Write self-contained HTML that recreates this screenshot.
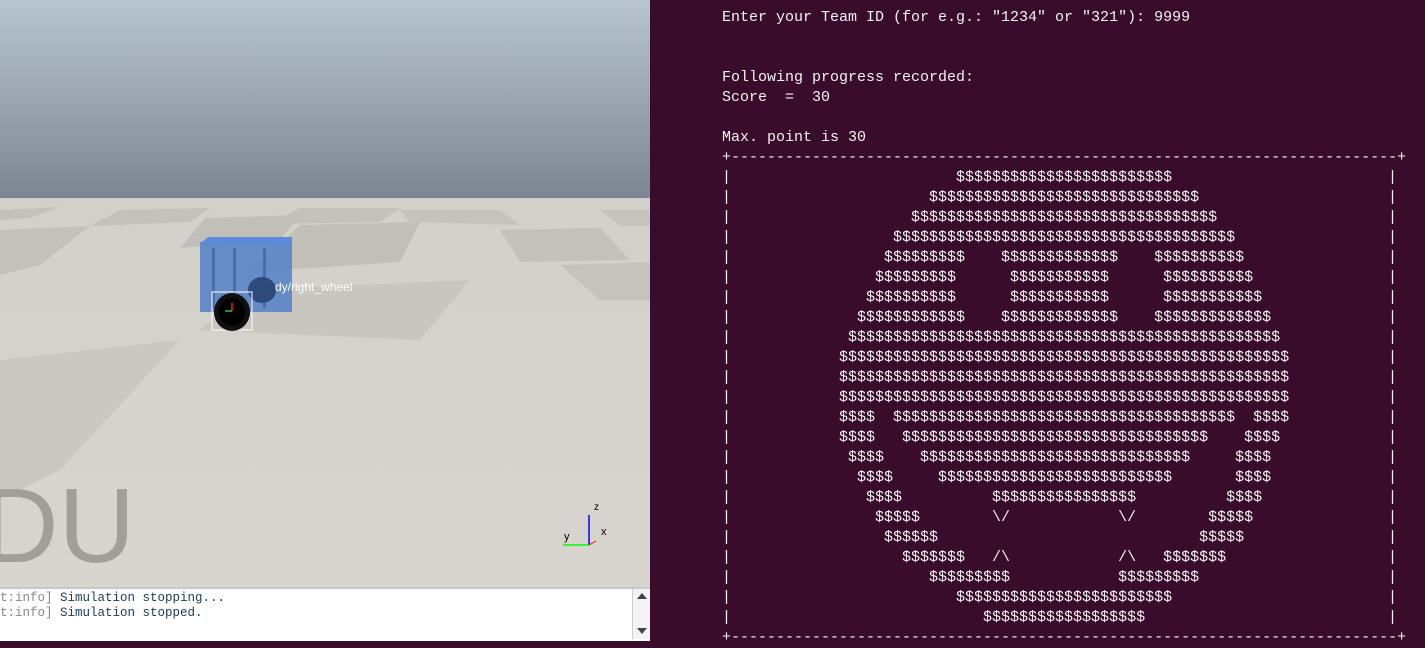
<!DOCTYPE html>
<html><head><meta charset="utf-8"><style>
*{margin:0;padding:0;box-sizing:border-box}
html,body{width:1425px;height:641px;overflow:hidden;background:#380c2a}
#left{position:absolute;left:0;top:0;width:650px;height:641px;background:#d5d2cb;overflow:hidden}
#term{position:absolute;left:650px;top:0;width:775px;height:641px;background:#380c2a}
pre{font-family:"Liberation Mono",monospace;font-size:15px;line-height:20px;color:#f2f2f2;position:absolute;white-space:pre}
#console{position:absolute;left:0;top:587px;width:650px;height:54px;background:#fff;border-top:2px solid #c8c8c8}
#console pre{font-size:12.5px;line-height:15px;left:0;top:2px;color:#1d3b57}
#console .g{color:#888}
#sb{position:absolute;left:632px;top:589px;width:18px;height:50px;background:#f4f4f4;border-left:1px solid #ccc}
</style></head><body>
<div id="left">
<svg width="650" height="641" style="position:absolute;left:0;top:0">
<defs><linearGradient id="sky" x1="0" y1="0" x2="0" y2="1"><stop offset="0" stop-color="#b8c4d0"/><stop offset="1" stop-color="#7b8591"/></linearGradient>
<linearGradient id="gr" x1="0" y1="0" x2="0" y2="1"><stop offset="0" stop-color="#d3d0c9"/><stop offset="1" stop-color="#d8d5ce"/></linearGradient></defs>
<rect x="0" y="0" width="650" height="202" fill="url(#sky)"/>
<rect x="0" y="198" width="650" height="400" fill="url(#gr)"/>
<polygon points="0,210 60,207 30,218 0,220" fill="#c4c1ba"/>
<polygon points="120,210 210,208 190,222 90,226" fill="#c4c1ba"/>
<polygon points="300,208 400,208 380,222 270,224" fill="#c4c1ba"/>
<polygon points="205,218 300,215 280,240 180,248" fill="#c2bfb8"/>
<polygon points="0,230 90,226 40,265 0,275" fill="#c4c1ba"/>
<polygon points="400,210 500,210 520,225 410,222" fill="#c6c3bc"/>
<polygon points="300,225 420,222 400,262 250,272" fill="#c2bfb8"/>
<polygon points="500,230 600,228 630,260 520,262" fill="#c4c1ba"/>
<polygon points="250,290 470,280 420,340 200,330" fill="#c9c6bf"/>
<polygon points="600,210 650,210 650,226 620,226" fill="#c6c3bc"/>
<polygon points="560,265 650,262 650,300 600,300" fill="#c6c3bc"/>
<polygon points="0,360 180,340 60,470 0,500" fill="#cbc8c1"/>
<text x="-18" y="562" font-family="Liberation Sans, sans-serif" font-size="106" fill="#a29f99">DU</text>
<rect x="200" y="242" width="92" height="70" fill="#5a84c8" opacity="0.9"/>
<polygon points="200,244 208,237 292,237 292,244" fill="#5b8cdc"/>
<rect x="212" y="248" width="3" height="60" fill="#486ea8"/>
<rect x="233" y="248" width="3" height="60" fill="#486ea8"/>
<rect x="263" y="248" width="3" height="60" fill="#486ea8"/>
<ellipse cx="262" cy="290" rx="14" ry="13" fill="#2d4a7a"/>
<rect x="212" y="292" width="40" height="38" fill="none" stroke="#fff" stroke-width="1"/>
<ellipse cx="232" cy="312" rx="18" ry="19" fill="#101010"/>
<ellipse cx="232" cy="312" rx="13" ry="14" fill="#000"/>
<line x1="232" y1="303" x2="232" y2="311" stroke="#e22" stroke-width="1.5"/>
<line x1="225" y1="311" x2="232" y2="311" stroke="#2c2" stroke-width="1.5"/>
<text x="275" y="291" font-family="Liberation Sans, sans-serif" font-size="12" fill="#fff">dy/right_wheel</text>
<line x1="589" y1="515" x2="589" y2="545" stroke="#00f" stroke-width="1.5"/>
<line x1="563" y1="545" x2="589" y2="545" stroke="#0f0" stroke-width="1.5"/>
<line x1="589" y1="545" x2="596" y2="541" stroke="#f00" stroke-width="1"/>
<text x="594" y="510" font-family="Liberation Sans, sans-serif" font-size="10" fill="#000">z</text>
<text x="601" y="535" font-family="Liberation Sans, sans-serif" font-size="11" fill="#000">x</text>
<text x="564" y="540" font-family="Liberation Sans, sans-serif" font-size="11" fill="#000">y</text>
</svg>
<div id="console"><pre><span class="g">t:info]</span> Simulation stopping...
<span class="g">t:info]</span> Simulation stopped.</pre></div>
<div id="sb"><div style="position:absolute;left:4px;top:4px;width:0;height:0;border-left:5px solid transparent;border-right:5px solid transparent;border-bottom:6px solid #444"></div><div style="position:absolute;left:4px;top:39px;width:0;height:0;border-left:5px solid transparent;border-right:5px solid transparent;border-top:6px solid #444"></div></div>
</div>
<div id="term">
<pre style="left:72px;top:8px">Enter your Team ID (for e.g.: "1234" or "321"): 9999


Following progress recorded:
Score  =  30

Max. point is 30
+--------------------------------------------------------------------------+
|                         $$$$$$$$$$$$$$$$$$$$$$$$
|                      $$$$$$$$$$$$$$$$$$$$$$$$$$$$$$
|                    $$$$$$$$$$$$$$$$$$$$$$$$$$$$$$$$$$
|                  $$$$$$$$$$$$$$$$$$$$$$$$$$$$$$$$$$$$$$
|                 $$$$$$$$$    $$$$$$$$$$$$$    $$$$$$$$$$
|                $$$$$$$$$      $$$$$$$$$$$      $$$$$$$$$$
|               $$$$$$$$$$      $$$$$$$$$$$      $$$$$$$$$$$
|              $$$$$$$$$$$$    $$$$$$$$$$$$$    $$$$$$$$$$$$$
|             $$$$$$$$$$$$$$$$$$$$$$$$$$$$$$$$$$$$$$$$$$$$$$$$
|            $$$$$$$$$$$$$$$$$$$$$$$$$$$$$$$$$$$$$$$$$$$$$$$$$$
|            $$$$$$$$$$$$$$$$$$$$$$$$$$$$$$$$$$$$$$$$$$$$$$$$$$
|            $$$$$$$$$$$$$$$$$$$$$$$$$$$$$$$$$$$$$$$$$$$$$$$$$$
|            $$$$  $$$$$$$$$$$$$$$$$$$$$$$$$$$$$$$$$$$$$$  $$$$
|            $$$$   $$$$$$$$$$$$$$$$$$$$$$$$$$$$$$$$$$    $$$$
|             $$$$    $$$$$$$$$$$$$$$$$$$$$$$$$$$$$$     $$$$
|              $$$$     $$$$$$$$$$$$$$$$$$$$$$$$$$       $$$$
|               $$$$          $$$$$$$$$$$$$$$$          $$$$
|                $$$$$        \/            \/        $$$$$
|                 $$$$$$                             $$$$$
|                   $$$$$$$   /\            /\   $$$$$$$
|                      $$$$$$$$$            $$$$$$$$$
|                         $$$$$$$$$$$$$$$$$$$$$$$$
|                            $$$$$$$$$$$$$$$$$$
+--------------------------------------------------------------------------+</pre>
<pre style="left:738px;top:168px">|
|
|
|
|
|
|
|
|
|
|
|
|
|
|
|
|
|
|
|
|
|
|</pre>
</div>
</body></html>
